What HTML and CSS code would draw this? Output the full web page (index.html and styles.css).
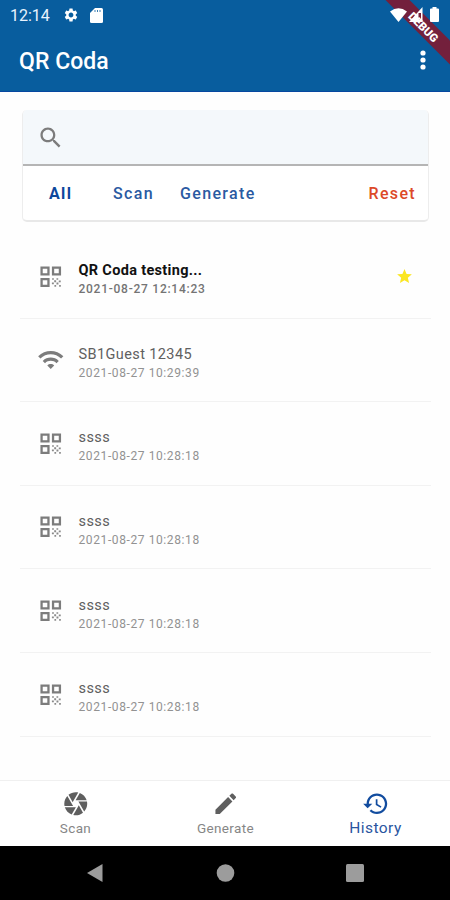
FILE: index.html
```html
<!DOCTYPE html>
<html lang="en">
<head>
<meta charset="utf-8">
<title>QR Coda</title>
<link rel="stylesheet" href="styles.css">
</head>
<body>
<svg class="defs" width="0" height="0">
  <symbol id="qr" viewBox="0 0 24 24"><path d="M3 11h8V3H3v8zm2-6h4v4H5V5zM3 21h8v-8H3v8zm2-6h4v4H5v-4zM13 3v8h8V3h-8zm6 6h-4V5h4v4z"/><path class="dots" d="M19.300 19.300h1.500v1.500h-1.500zM13.200 13.200h1.500v1.500h-1.500zM15 15h1.700v1.700H15zM13 17h1.700v1.500H13zM15.200 19.200h1.500v1.500h-1.500zM17 17h1.700v1.700H17zM17 13.200h1.500v1.500H17zM19 15.200h1.700v1.500H19z"/></symbol>
</svg>
<div class="screen">
  <header class="top">
    <div class="status">
      <span class="clock">12:14</span>
      <svg class="gear" viewBox="0 0 24 24"><path d="M19.14 12.94c.04-.3.06-.61.06-.94 0-.32-.02-.64-.07-.94l2.03-1.58c.18-.14.23-.41.12-.61l-1.92-3.32c-.12-.22-.37-.29-.59-.22l-2.39.96c-.5-.38-1.03-.7-1.62-.94l-.36-2.54c-.04-.24-.24-.41-.48-.41h-3.84c-.24 0-.43.17-.47.41l-.36 2.54c-.59.24-1.13.57-1.62.94l-2.39-.96c-.22-.08-.47 0-.59.22L2.74 8.87c-.12.21-.08.47.12.61l2.03 1.58c-.05.3-.09.63-.09.94s.02.64.07.94l-2.03 1.58c-.18.14-.23.41-.12.61l1.92 3.32c.12.22.37.29.59.22l2.39-.96c.5.38 1.03.7 1.62.94l.36 2.54c.05.24.24.41.48.41h3.84c.24 0 .44-.17.47-.41l.36-2.54c.59-.24 1.13-.56 1.62-.94l2.39.96c.22.08.47 0 .59-.22l1.92-3.32c.12-.22.07-.47-.12-.61l-2.01-1.58zM12 15.6c-1.98 0-3.6-1.62-3.6-3.6s1.62-3.6 3.6-3.6 3.6 1.62 3.6 3.6-1.62 3.6-3.6 3.6z"/></svg>
      <svg class="sd" viewBox="0 0 13 15"><path d="M5 0h6.500a1.500 1.500 0 0 1 1.500 1.500v12a1.500 1.500 0 0 1-1.500 1.500h-10A1.500 1.500 0 0 1 0 13.500V5z"/><path class="slots" d="M5 2v2M7.500 2v2M10 2v2"/></svg>
      <span class="grow"></span>
      <svg class="signal" viewBox="0 0 52 16"><path d="M0 4.500Q8.500-2 17 4.500L8.500 15z"/><path d="M32.500 0v15H19z"/><path class="cut" d="M28.500 6h2.500v7h-2.500z"/><path d="M42.500 1.500V0h4v1.500H48q1 0 1 1V14q0 1-1 1h-7q-1 0-1-1V2.500q0-1 1-1z"/></svg>
    </div>
    <div class="bar">
      <h1>QR Coda</h1>
      <svg class="more" viewBox="0 0 6 20"><circle cx="3" cy="3" r="2.600"/><circle cx="3" cy="10" r="2.600"/><circle cx="3" cy="17" r="2.600"/></svg>
    </div>
    <div class="ribbon"></div>
    <div class="debug">DEBUG</div>
  </header>
  <main>
    <section class="filter">
      <div class="search"><svg class="icon" viewBox="0 0 24 24"><path d="M15.500 14h-.79l-.28-.27C15.410 12.590 16 11.110 16 9.500 16 5.910 13.090 3 9.500 3S3 5.910 3 9.500 5.910 16 9.500 16c1.610 0 3.090-.59 4.230-1.570l.27.28v.79l5 4.990L20.490 19l-4.990-5zm-6 0C7.010 14 5 11.990 5 9.500S7.010 5 9.500 5 14 7.010 14 9.500 11.990 14 9.500 14z"/></svg></div>
      <div class="chips"><span class="all">All</span><span class="scan">Scan</span><span class="gen">Generate</span><span class="reset">Reset</span></div>
    </section>
    <ul class="list">
      <li class="row unread"><svg class="icon"><use href="#qr"/></svg><div class="text"><b class="name">QR Coda testing...</b><time>2021-08-27 12:14:23</time></div><svg class="star" viewBox="2 2 20 19"><path d="M12 17.270L18.180 21l-1.640-7.030L22 9.240l-7.190-.61L12 2 9.190 8.630 2 9.240l5.460 4.730L5.820 21z"/></svg></li>
      <li class="row wifi"><svg class="icon" viewBox="0 0 24 24"><path d="M1 9l2 2c4.970-4.970 13.030-4.970 18 0l2-2C16.930 2.930 7.080 2.930 1 9zm8 8l3 3 3-3c-1.650-1.660-4.340-1.660-6 0zm-4-4l2 2c2.760-2.760 7.240-2.760 10 0l2-2C15.140 9.140 8.870 9.140 5 13z"/></svg><div class="text"><span class="name">SB1Guest 12345</span><time>2021-08-27 10:29:39</time></div></li>
      <li class="row"><svg class="icon"><use href="#qr"/></svg><div class="text"><span class="name">ssss</span><time>2021-08-27 10:28:18</time></div></li>
      <li class="row"><svg class="icon"><use href="#qr"/></svg><div class="text"><span class="name">ssss</span><time>2021-08-27 10:28:18</time></div></li>
      <li class="row"><svg class="icon"><use href="#qr"/></svg><div class="text"><span class="name">ssss</span><time>2021-08-27 10:28:18</time></div></li>
      <li class="row"><svg class="icon"><use href="#qr"/></svg><div class="text"><span class="name">ssss</span><time>2021-08-27 10:28:18</time></div></li>
    </ul>
  </main>
  <nav class="tabs">
    <div class="tab"><svg class="icon" viewBox="0 0 24 24"><path d="M9.400 10.500l4.770-8.260C13.470 2.090 12.750 2 12 2c-2.400 0-4.600.85-6.320 2.250l3.660 6.350.06-.1zM21.540 9c-.92-2.920-3.150-5.260-6-6.340L11.880 9h9.660zm.26 1h-7.490l.29.5 4.760 8.250C21 16.970 22 14.610 22 12c0-.69-.07-1.350-.2-2zM8.540 12l-3.900-6.750C3.010 7.030 2 9.390 2 12c0 .69.07 1.350.2 2h7.490l-1.150-2zm-6.080 3c.92 2.920 3.150 5.260 6 6.340L12.120 15H2.460zm11.270 0l-3.900 6.760c.7.15 1.420.24 2.170.24 2.400 0 4.600-.85 6.320-2.250l-3.660-6.350-.93 1.600z"/></svg><span>Scan</span></div>
    <div class="tab"><svg class="icon" viewBox="0 0 24 24"><path d="M3 17.250V21h3.750L17.810 9.940l-3.750-3.750L3 17.250zM20.710 7.040c.39-.39.39-1.020 0-1.410l-2.340-2.340c-.39-.39-1.020-.39-1.410 0l-1.830 1.830 3.750 3.750 1.830-1.830z"/></svg><span>Generate</span></div>
    <div class="tab active"><svg class="icon" viewBox="0 0 24 24"><path d="M13 3c-4.970 0-9 4.030-9 9H1l3.890 3.890.07.14L9 12H6c0-3.870 3.130-7 7-7s7 3.130 7 7-3.130 7-7 7c-1.930 0-3.680-.79-4.940-2.060l-1.420 1.420C8.270 19.990 10.510 21 13 21c4.970 0 9-4.030 9-9s-4.030-9-9-9zm-1 5v5l4.280 2.540.72-1.210-3.500-2.080V8H12z"/></svg><span>History</span></div>
  </nav>
  <footer class="system">
    <svg viewBox="0 0 20 20"><path d="M2 10L17.500 1v18z"/></svg>
    <svg viewBox="0 0 20 20"><circle cx="10.500" cy="10" r="8.800"/></svg>
    <svg viewBox="0 0 20 20"><rect x="1" y="1" width="18" height="18" rx="1.500"/></svg>
  </footer>
</div>
</body>
</html>
```
FILE: styles.css
```css
* { box-sizing: border-box; }
body { margin: 0; font-family: Roboto, sans-serif; background: #fefefe; }
.defs { display: block; }
.screen { width: 450px; height: 900px; display: flex; flex-direction: column; overflow: hidden; }
svg { display: block; flex: none; fill: currentColor; }
.icon { width: 27.500px; height: 27.500px; color: #7c7c7c; }
.dots { opacity: 0.9; }

.top { position: relative; height: 92px; flex: none; overflow: hidden; background: #085d9e; border-bottom: 1px solid #0648a0; color: #fff; }
.status { display: flex; align-items: center; height: 30px; padding: 0 8px 0 10px; }
.clock { width: 53px; font-size: 16px; letter-spacing: 0; color: #e8f3ff; }
.gear { width: 16px; height: 16px; }
.sd { width: 13px; height: 15px; margin-left: 11px; }
.slots { stroke: #085d9e; stroke-width: 0.8; }
.grow { flex: 1; }
.signal { width: 52px; height: 16px; position: relative; z-index: 2; }
.cut { fill: #73203c; }
.bar { display: flex; justify-content: space-between; align-items: center; height: 62px; padding: 0 24px 0 19px; }
h1 { margin: 0; font-size: 23px; font-weight: 500; letter-spacing: 0.050px; }
.more { width: 6px; height: 20px; margin-top: -2px; }
.ribbon, .debug { position: absolute; left: 364px; top: 18px; width: 120px; height: 17px; transform: rotate(45deg); }
.ribbon { background: #73203c; z-index: 1; }
.debug { z-index: 3; top: 19px; left: 363px; line-height: 17px; text-align: center; font-size: 11.500px; font-weight: 900; }

main { flex: 1; padding: 18px 19px 0 20px; }
.filter { height: 112px; margin: 0 2px 0 2px; border-radius: 5px; overflow: hidden; background: #fff; border: 1px solid #ededed; border-top: 0; border-bottom: 2px solid #e8e8e8; }
.search { height: 56px; display: flex; align-items: center; padding: 2px 0 0 14px; background: #f4f8fb; border-bottom: 2px solid #b5b5b5; }
.chips { display: flex; align-items: center; height: 55px; padding: 0 12px 0 26px; font-size: 16px; font-weight: 500; letter-spacing: 1.350px; color: #2a5aa2; }
.all { width: 64px; font-weight: 700; color: #0d479c; }
.scan { width: 67px; }
.reset { margin-left: auto; color: #dc4928; }

.list { list-style: none; margin: 13px 0 0; padding: 0; }
.row { height: 83.600px; display: flex; align-items: center; padding: 0 19px 0 17px; border-bottom: 1px solid #f2f2f2; }
.text { flex: 1; margin-left: 14px; padding-top: 9px; display: flex; flex-direction: column; }
.name { font-size: 14.500px; line-height: 18px; letter-spacing: 0.4px; color: #606060; }
time { font-size: 12px; line-height: 19px; letter-spacing: 0.600px; color: #929292; }
.unread .name { font-weight: 700; letter-spacing: 0.32px; color: #111; }
.unread time { font-weight: 500; letter-spacing: 0.740px; color: #747474; }
.star { width: 15px; height: 14px; color: #fbe622; }

.tabs { height: 66px; flex: none; display: grid; grid-template-columns: repeat(3, 1fr); background: #fff; border-top: 1px solid #f0f0f0; }
.tab { display: flex; flex-direction: column; align-items: center; padding: 9px 0 0 1px; font-size: 13.500px; line-height: 21px; letter-spacing: 0.350px; color: #868686; }
.tab .icon { color: #5f5f5f; }
.tab.active { color: #2a559f; font-size: 15.500px; line-height: 20px; letter-spacing: 0.45px; }
.tab.active .icon { color: #124c9f; }
.system { height: 54px; flex: none; display: flex; justify-content: space-between; align-items: center; padding: 0 85px; background: #000; color: #9c9c9c; }
.system svg { width: 20px; height: 20px; }
```
